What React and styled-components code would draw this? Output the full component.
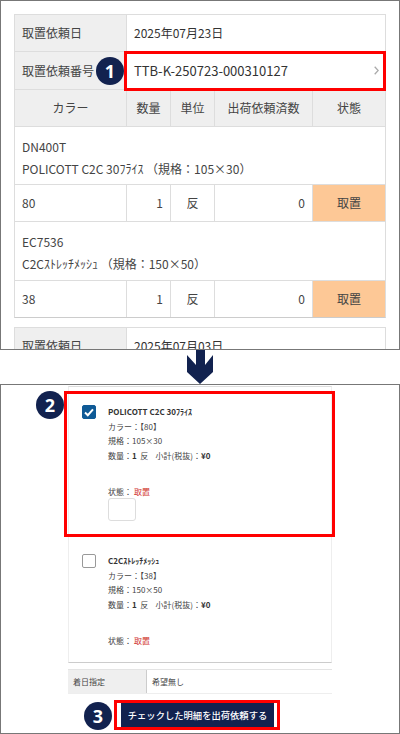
import React from 'react';
import styled, { createGlobalStyle } from 'styled-components';

const Global = createGlobalStyle`
html, body { margin: 0; padding: 0; background: #fff; }
body { width: 400px; height: 734px; overflow: hidden; font-family: "Noto Sans CJK JP", "Noto Sans", sans-serif; color: #444; }
`;

const Frame = styled.div`
position: relative;
box-sizing: border-box;
width: 400px;
height: ${p => p.$h}px;
border: 1px solid #777;
overflow: hidden;
`;
const TopInner = styled.div`
display: flex;
flex-direction: column;
gap: 9px;
padding: 13px 13px 0;
`;
const Table = styled.div`
border: 1px solid #ddd;
border-bottom-color: #ccc;
font-size: 12px;
line-height: 20px;
`;
const Row = styled.div`
display: grid;
grid-template-columns: ${p => p.$cols || '112px 1fr'};
height: ${p => p.$h || 37}px;
border-bottom: ${p => (p.$last ? 'none' : '1px solid #ddd')};
box-sizing: border-box;
`;
const Cols = '112px 44px 44px 98px 1fr';
const Cell = styled.div`
display: flex;
align-items: center;
justify-content: ${p => p.$justify || 'flex-start'};
padding: 0 ${p => p.$pad ?? 7}px;
background: ${p => p.$bg || '#fff'};
border-right: ${p => (p.$noline ? 'none' : '1px solid #ddd')};
color: #444;
`;
const Label = styled(Cell)`
background: #efefef;
`;
const ValueCell = styled(Cell)`
border-right: none;
color: #333;
justify-content: space-between;
`;
const OrderNo = styled.span`
font-size: 13px;
`;
const Chevron = styled.svg`
width: 5px;
height: 9px;
margin-right: -1px;
`;
const ItemBlock = styled.div`
height: ${p => p.$h}px;
box-sizing: border-box;
padding: 9px 7px 0;
border-bottom: 1px solid #ddd;
line-height: 22px;
color: #444;
`;
const Arrow = styled.div`
display: flex;
justify-content: center;
height: 34px;
`;
const List = styled.div`
width: 264px;
margin: 1px 0 0 67px;
display: flex;
flex-direction: column;
`;
const Item = styled.div`
display: flex;
align-items: flex-start;
height: ${p => p.$h}px;
box-sizing: border-box;
padding: ${p => p.$top}px 0 0 13px;
border-left: 1px solid #eee;
border-right: 1px solid #eee;
border-top: ${p => (p.$first ? '1px solid #ddd' : 'none')};
border-bottom: ${p => (p.$last ? '1px solid #ccc' : 'none')};
`;
const Check = styled.div`
flex: none;
box-sizing: border-box;
width: 14px;
height: 14px;
border-radius: 2px;
margin-right: 12px;
display: flex;
align-items: center;
justify-content: center;
background: ${p => (p.$on ? '#0f5a96' : '#fff')};
border: 1px solid ${p => (p.$on ? '#0f5a96' : '#999')};
`;
const Detail = styled.div`
font-size: 8px;
line-height: 14.7px;
color: #444;
`;
const ItemTitle = styled.div`
font-weight: 700;
color: #333;
`;
const Status = styled.div`
margin-top: 21px;
`;
const Red = styled.span`
color: #d0342c;
margin-left: 2px;
`;
const Qty = styled.b`
color: #333;
`;
const EmptyBox = styled.div`
box-sizing: border-box;
width: 28px;
height: 23px;
margin-top: -2px;
border: 1px solid #ddd;
border-radius: 3px;
`;
const DateRow = styled.div`
display: grid;
grid-template-columns: 79px 1fr;
height: 25px;
margin-top: 6px;
font-size: 8px;
border-top: 1px solid #e4e4e4;
border-bottom: 1px solid #eee;
box-sizing: border-box;
`;
const DateLabel = styled.div`
display: flex;
align-items: center;
padding-left: 5px;
background: #efefef;
border-right: 1px solid #ccc;
color: #444;
`;
const DateValue = styled.div`
display: flex;
align-items: center;
padding-left: 5px;
color: #444;
`;
const ButtonRow = styled.div`
display: flex;
justify-content: center;
margin: 9px 0 0 -5px;
`;
const Button = styled.button`
width: 153px;
height: 24px;
border: none;
padding: 0;
background: #12224f;
color: #fff;
font-family: inherit;
font-size: 9.3px;
font-weight: 500;
`;
const Badge = styled.div`
position: absolute;
left: ${p => p.$x}px;
top: ${p => p.$y}px;
width: 28px;
height: 28px;
border-radius: 50%;
background: #12224f;
color: #fff;
font-family: "Noto Sans", sans-serif;
font-size: 18px;
font-weight: 700;
display: flex;
align-items: center;
justify-content: center;
z-index: 3;
`;
const RedBox = styled.div`
position: absolute;
left: ${p => p.$x}px;
top: ${p => p.$y}px;
width: ${p => p.$w}px;
height: ${p => p.$h}px;
box-sizing: border-box;
border: 3px solid #f00;
pointer-events: none;
z-index: 2;
`;

const App = () => (
  <>
    <Global />
    <Frame $h={350}>
      <TopInner>
        <Table>
          <Row>
            <Label>取置依頼日</Label>
            <ValueCell>2025年07月23日</ValueCell>
          </Row>
          <Row $h={38}>
            <Label>取置依頼番号</Label>
            <ValueCell>
              <OrderNo>TTB-K-250723-000310127</OrderNo>
              <Chevron viewBox="0 0 5 9">
                <path d="M0.7 0.7L4.2 4.5L0.7 8.3" fill="none" stroke="#aaa" strokeWidth="1.3" />
              </Chevron>
            </ValueCell>
          </Row>
          <Row $cols={Cols}>
            <Label $justify="center">カラー</Label>
            <Label $justify="center" $pad={0}>数量</Label>
            <Label $justify="center" $pad={0}>単位</Label>
            <Label $justify="center" $pad={0}>出荷依頼済数</Label>
            <Label $justify="center" $pad={0} $noline>状態</Label>
          </Row>
          <ItemBlock $h={58}>
            DN400T<br />POLICOTT C2C 30ﾌﾗｲｽ （規格：105×30）
          </ItemBlock>
          <Row $cols={Cols}>
            <Cell>80</Cell>
            <Cell $justify="flex-end">1</Cell>
            <Cell $justify="center">反</Cell>
            <Cell $justify="flex-end">0</Cell>
            <Cell $justify="center" $bg="#fdc896" $noline>取置</Cell>
          </Row>
          <ItemBlock $h={59}>
            EC7536<br />C2Cｽﾄﾚｯﾁﾒｯｼｭ （規格：150×50）
          </ItemBlock>
          <Row $cols={Cols} $h={36} $last>
            <Cell>38</Cell>
            <Cell $justify="flex-end">1</Cell>
            <Cell $justify="center">反</Cell>
            <Cell $justify="flex-end">0</Cell>
            <Cell $justify="center" $bg="#fdc896" $noline>取置</Cell>
          </Row>
        </Table>
        <Table>
          <Row>
            <Label>取置依頼日</Label>
            <ValueCell>2025年07月03日</ValueCell>
          </Row>
        </Table>
      </TopInner>
      <Badge $x={95} $y={56}>1</Badge>
      <RedBox $x={123} $y={50} $w={262} $h={40} />
    </Frame>
    <Arrow>
      <svg width="26" height="34" viewBox="0 0 26 34">
        <path d="M9 0H18V15L26 5V22L13 34L0 22V5L9 15Z" fill="#12224f" />
      </svg>
    </Arrow>
    <Frame $h={350}>
      <List>
        <Item $h={149} $top={18} $first>
          <Check $on>
            <svg width="10" height="9" viewBox="0 0 10 9">
              <path d="M1 4.5L3.8 7.2L9 1.4" fill="none" stroke="#fff" strokeWidth="2" />
            </svg>
          </Check>
          <Detail>
            <ItemTitle>POLICOTT C2C 30ﾌﾗｲｽ</ItemTitle>
            <div>カラー：【80】</div>
            <div>規格：105×30</div>
            <div>数量：<Qty>1</Qty>&nbsp;&nbsp;反&nbsp;&nbsp;&nbsp;&nbsp;小計(税抜)：<Qty>¥0</Qty></div>
            <Status>状態：<Red>取置</Red></Status>
            <EmptyBox />
          </Detail>
        </Item>
        <Item $h={128} $top={19} $last>
          <Check />
          <Detail>
            <ItemTitle>C2Cｽﾄﾚｯﾁﾒｯｼｭ</ItemTitle>
            <div>カラー：【38】</div>
            <div>規格：150×50</div>
            <div>数量：<Qty>1</Qty>&nbsp;&nbsp;反&nbsp;&nbsp;&nbsp;&nbsp;小計(税抜)：<Qty>¥0</Qty></div>
            <Status>状態：<Red>取置</Red></Status>
          </Detail>
        </Item>
        <DateRow>
          <DateLabel>着日指定</DateLabel>
          <DateValue>希望無し</DateValue>
        </DateRow>
        <ButtonRow>
          <Button>チェックした明細を出荷依頼する</Button>
        </ButtonRow>
      </List>
      <Badge $x={35} $y={6}>2</Badge>
      <Badge $x={83} $y={317}>3</Badge>
      <RedBox $x={63} $y={6} $w={271} $h={146} />
      <RedBox $x={113} $y={315} $w={166} $h={30} />
    </Frame>
  </>
);

export default App;
